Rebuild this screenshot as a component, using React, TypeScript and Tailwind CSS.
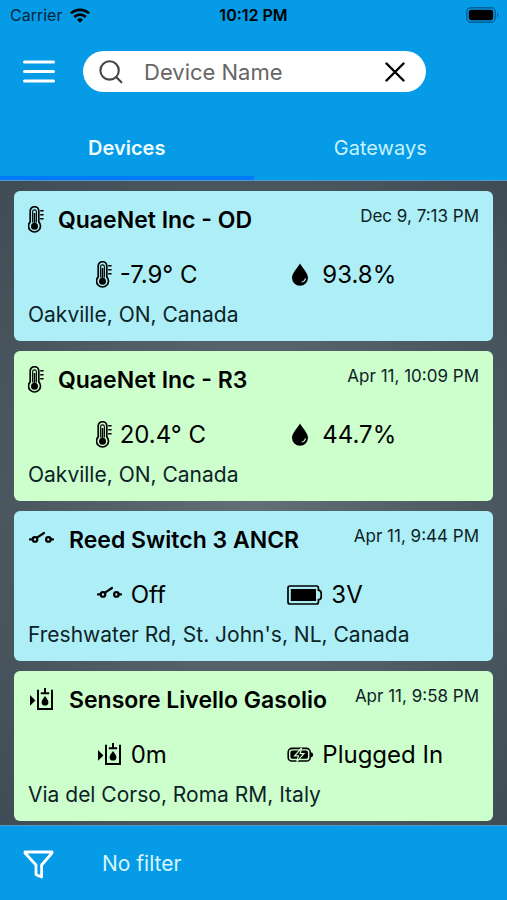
import React from 'react';

const MenuIcon = () => (
  <svg width="32" height="24" viewBox="0 0 32 24" stroke="currentColor" strokeWidth="3" strokeLinecap="round">
    <path d="M1.5 2h29M1.5 11.5h29M1.5 21h29" />
  </svg>
);

const SearchIcon = () => (
  <svg width="24" height="24" viewBox="0 0 24 24" fill="none" stroke="currentColor" strokeWidth="2.1" strokeLinecap="round">
    <circle cx="10.6" cy="10.4" r="9.2" />
    <path d="M17.4 17.2L22.4 22.2" />
  </svg>
);

const CloseIcon = () => (
  <svg width="20" height="20" viewBox="0 0 20 20" stroke="currentColor" strokeWidth="2.4" strokeLinecap="round">
    <path d="M1.5 1.5l17 17M18.5 1.5l-17 17" />
  </svg>
);

const FunnelIcon = () => (
  <svg width="31" height="29" viewBox="0 0 31 29" fill="none" stroke="currentColor" strokeWidth="2.8" strokeLinejoin="round">
    <path d="M2 2H29V3L18.6 15V27L13 24.6V15L2 3Z" />
  </svg>
);

const WifiIcon = () => (
  <svg width="20" height="15" viewBox="0 0 20 15" fill="none" stroke="currentColor" strokeWidth="2.7">
    <path d="M1 5.4A13 13 0 0 1 19 5.4" />
    <path d="M4.2 9A8.4 8.4 0 0 1 15.8 9" />
    <path d="M10 14.8L7 11.7A4.4 4.4 0 0 1 13 11.7Z" fill="currentColor" stroke="none" />
  </svg>
);

const PhoneBatteryIcon = () => (
  <svg width="33" height="16" viewBox="0 0 33 16">
    <rect x="0.8" y="0.8" width="28.4" height="14.4" rx="4" fill="none" stroke="#04619a" strokeWidth="1.4" />
    <rect x="2.8" y="2.8" width="24.4" height="10.4" rx="2.4" fill="#000" />
    <path d="M31 5.6C32.8 6.4 32.8 9.6 31 10.4Z" fill="#04619a" />
  </svg>
);

const ThermometerIcon = () => (
  <svg width="16" height="28" viewBox="0 0 16 28" fill="none" stroke="currentColor">
    <path d="M2.2 5a4.3 4.3 0 0 1 8.6 0V15.8a6 6 0 1 1-8.6 0Z" strokeWidth="1.7" />
    <path d="M4.6 16.6V5.8a1.9 1.9 0 0 1 3.8 0V16.6" strokeWidth="1.1" />
    <path d="M6.5 7V20" strokeWidth="1.7" />
    <circle cx="6.5" cy="20.2" r="3.5" fill="currentColor" stroke="none" />
    <path d="M12.2 4.8h3.4M12.2 8.8h3.4M12.2 12.8h3.4" strokeWidth="1.5" />
  </svg>
);

const SwitchIcon = () => (
  <svg width="27" height="28" viewBox="0 0 27 28" fill="none" stroke="currentColor" strokeWidth="2.2" strokeLinecap="round">
    <path d="M2 13.4h2.4M22.6 13.4H25" />
    <circle cx="7" cy="13.4" r="2.3" />
    <circle cx="20.4" cy="13.4" r="2.3" />
    <path d="M9 11.6L16 7" />
  </svg>
);

const TankIcon = () => (
  <svg width="27" height="28" viewBox="0 0 27 28">
    <path d="M2 9L7.4 14.4L2 19.8Z" fill="currentColor" />
    <path d="M10 3.8V23H24V3.8M12.8 7.2H21.2M17 2V7.2" fill="none" stroke="currentColor" strokeWidth="2" />
    <path d="M17 10C18.6 12.6 20.4 14.2 20.4 16.2a3.4 3.4 0 0 1-6.8 0C13.6 14.2 15.4 12.6 17 10Z" fill="currentColor" />
  </svg>
);

const DropIcon = () => (
  <svg width="27" height="26" viewBox="0 0 27 26">
    <path d="M13 1.4C15.6 5.8 21 11 21 15.8a8 8 0 0 1-16 0C5 11 10.4 5.8 13 1.4Z" fill="currentColor" />
    <path d="M18.4 16.8A4.4 4.4 0 0 1 15.2 20" fill="none" stroke="#c6f5e6" strokeWidth="1.2" strokeLinecap="round" />
  </svg>
);

const BatteryIcon = () => (
  <svg width="36" height="20" viewBox="0 0 36 20">
    <path
      d="M3 1H29.6Q31.4 1 31.4 3V5.2Q34.2 5.6 34.2 8V12Q34.2 14.4 31.4 14.8V17Q31.4 19 29.6 19H3Q1 19 1 17V3Q1 1 3 1Z"
      fill="none"
      stroke="currentColor"
      strokeWidth="1.7"
    />
    <rect x="3.8" y="4" width="25.2" height="12" fill="currentColor" />
  </svg>
);

const PluggedIcon = () => (
  <svg width="27" height="16" viewBox="0 0 27 16">
    <rect x="1.2" y="1.4" width="22" height="12.6" rx="3.6" fill="none" stroke="currentColor" strokeWidth="1.6" />
    <path d="M24 5.2Q26.2 5.4 26.2 7.7Q26.2 10 24 10.2Z" fill="currentColor" />
    <rect x="3.4" y="3.6" width="17.6" height="8.2" rx="1.8" fill="currentColor" />
    <path d="M14.6 1L7.6 8.8H11.4L9.8 14.6L17 6.6H13.2Z" fill="currentColor" stroke="#ccffcc" strokeWidth="1.2" />
  </svg>
);

const devices = [
  {
    name: 'QuaeNet Inc - OD',
    time: 'Dec 9, 7:13 PM',
    icon: <ThermometerIcon />,
    readings: [
      { icon: <ThermometerIcon />, value: '-7.9° C' },
      { icon: <DropIcon />, value: '93.8%' },
    ],
    address: 'Oakville, ON, Canada',
    color: 'bg-[#aeeff7]',
  },
  {
    name: 'QuaeNet Inc - R3',
    time: 'Apr 11, 10:09 PM',
    icon: <ThermometerIcon />,
    readings: [
      { icon: <ThermometerIcon />, value: '20.4° C' },
      { icon: <DropIcon />, value: '44.7%' },
    ],
    address: 'Oakville, ON, Canada',
    color: 'bg-[#ccffcc]',
  },
  {
    name: 'Reed Switch 3 ANCR',
    time: 'Apr 11, 9:44 PM',
    icon: <SwitchIcon />,
    readings: [
      { icon: <SwitchIcon />, value: 'Off' },
      { icon: <BatteryIcon />, value: '3V' },
    ],
    address: "Freshwater Rd, St. John's, NL, Canada",
    color: 'bg-[#aeeff7]',
  },
  {
    name: 'Sensore Livello Gasolio',
    time: 'Apr 11, 9:58 PM',
    icon: <TankIcon />,
    readings: [
      { icon: <TankIcon />, value: '0m' },
      { icon: <PluggedIcon />, value: 'Plugged In' },
    ],
    address: 'Via del Corso, Roma RM, Italy',
    color: 'bg-[#ccffcc]',
  },
];

const App = () => {
  return (
    <div className="flex min-h-screen flex-col bg-[#059be6] font-['Inter','Liberation_Sans',sans-serif] text-black">
      {/* Status bar */}
      <div className="grid h-[30px] grid-cols-3 items-center px-2 text-base text-[#06263a]">
        <div className="flex items-center gap-2 pl-[2px]">
          Carrier
          <span className="text-black"><WifiIcon /></span>
        </div>
        <div className="text-center font-semibold whitespace-nowrap text-black">10:12 PM</div>
        <div className="flex justify-end"><PhoneBatteryIcon /></div>
      </div>

      {/* Search */}
      <header className="mt-[21px] flex items-center pr-[16%] pl-[23px]">
        <button type="button" aria-label="Menu" className="mr-7 text-white"><MenuIcon /></button>
        <div className="flex h-[41px] min-w-0 flex-1 items-center rounded-full bg-white pr-[21px] pl-4">
          <span className="text-[#444]"><SearchIcon /></span>
          <input
            type="text"
            aria-label="Device Name"
            placeholder="Device Name"
            className="ml-[21px] min-w-0 flex-1 bg-transparent pt-[2px] text-[22px] outline-none placeholder:text-[#666]"
          />
          <button type="button" aria-label="Clear"><CloseIcon /></button>
        </div>
      </header>

      {/* Tabs */}
      <nav className="mt-[25px] flex h-16 border-b border-[#4f9cc8] text-xl">
        <button type="button" className="flex-1 border-b-4 border-[#007aff] pt-[2px] font-semibold text-[#eefcff]">Devices</button>
        <button type="button" className="flex-1 border-b-4 border-transparent pt-[2px] text-[#c8f2ff]">Gateways</button>
      </nav>

      {/* Device list */}
      <main className="flex flex-1 flex-col gap-[10px] bg-radial from-[#636f77] to-[#3f4c55] px-[14px] pt-[10px] pb-1">
        {devices.map((device) => (
          <article key={device.name} className={`rounded-md px-[14px] pt-[9px] pb-[11px] ${device.color}`}>
            <div className="flex items-start">
              <div className="flex h-10 shrink-0 items-center">{device.icon}</div>
              <h2 className="ml-[14px] flex-1 text-[23px] leading-10 font-semibold whitespace-nowrap">{device.name}</h2>
              <time className="text-[17px] leading-8 whitespace-nowrap text-[#0d2328]">{device.time}</time>
            </div>
            <div className="mt-[15px] grid grid-cols-2 pl-[15%] text-2xl leading-10">
              {device.readings.map((reading) => (
                <div key={reading.value} className="flex items-center gap-2 whitespace-nowrap">
                  {reading.icon}
                  {reading.value}
                </div>
              ))}
            </div>
            <p className="mt-[5px] text-[21px] leading-[30px] text-[#0d2328]">{device.address}</p>
          </article>
        ))}
      </main>

      {/* Filter bar */}
      <footer className="h-[75px] border-t border-[#4f9cc8]">
        <button type="button" className="flex h-full items-center gap-12 pt-[2px] pl-[23px] text-[21px] text-[#d8f6ff]">
          <span className="text-white"><FunnelIcon /></span>
          No filter
        </button>
      </footer>
    </div>
  );
};

export default App;
